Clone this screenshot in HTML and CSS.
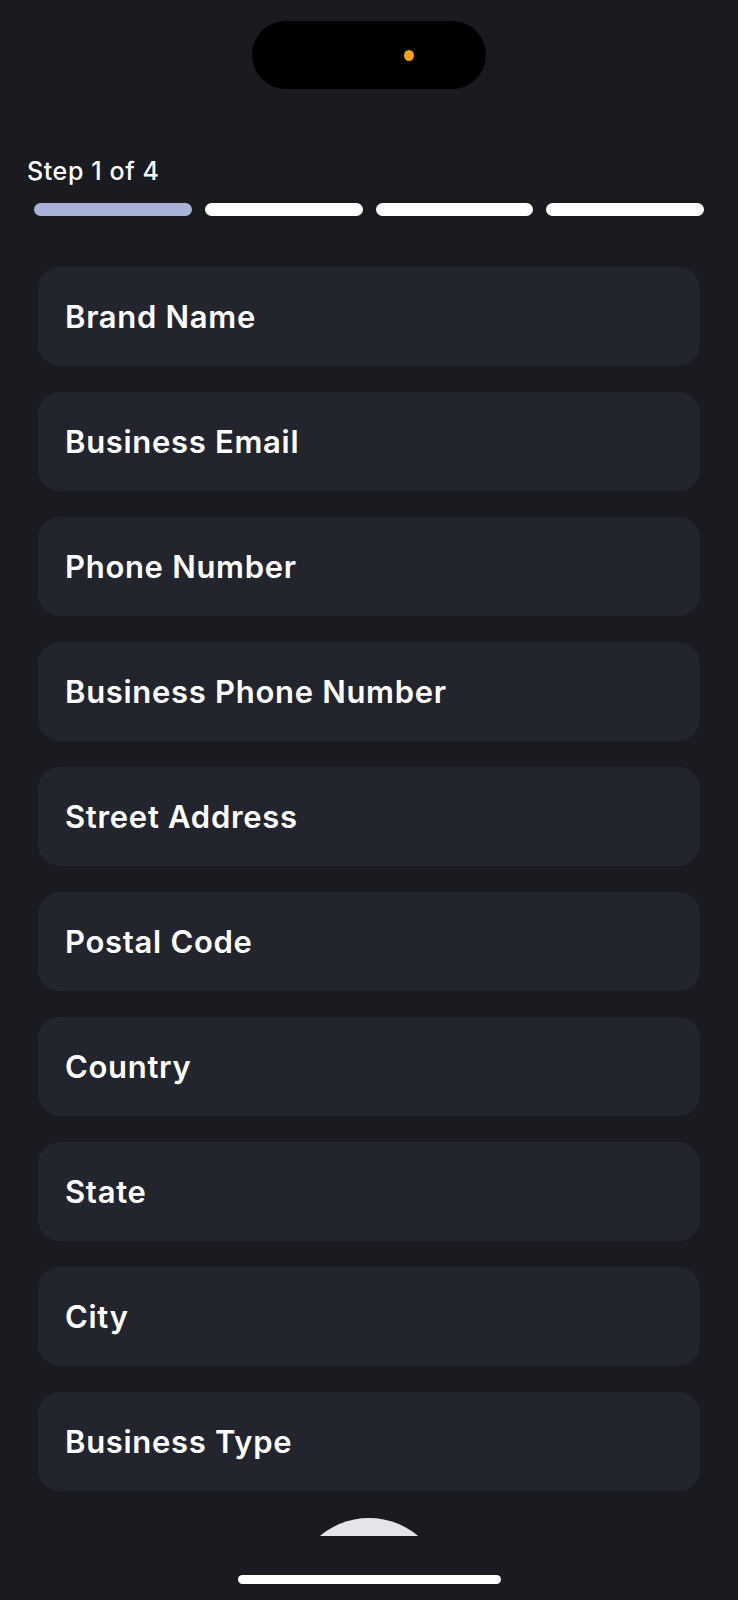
FILE: index.html
```html
<!DOCTYPE html>
<html lang="en">
<head>
<meta charset="utf-8">
<title>Step 1 of 4</title>
<link rel="stylesheet" href="styles.css">
</head>
<body>
<div class="screen">
  <div class="status">
    <div class="island"><span class="cam-dot"></span></div>
  </div>
  <div class="step-label">Step 1 of 4</div>
  <div class="progress">
    <span class="seg active"></span>
    <span class="seg"></span>
    <span class="seg"></span>
    <span class="seg"></span>
  </div>
  <div class="fields">
    <div class="field">Brand Name</div>
    <div class="field">Business Email</div>
    <div class="field">Phone Number</div>
    <div class="field">Business Phone Number</div>
    <div class="field">Street Address</div>
    <div class="field">Postal Code</div>
    <div class="field">Country</div>
    <div class="field">State</div>
    <div class="field">City</div>
    <div class="field">Business Type</div>
  </div>
  <div class="fab-wrap"><div class="fab"></div></div>
  <div class="home-bar"><span class="home-indicator"></span></div>
</div>
</body>
</html>
```
FILE: styles.css
```css
html, body {
  margin: 0;
  padding: 0;
  background: #1a1b20;
}
.screen {
  width: 738px;
  height: 1600px;
  background: #1a1b20;
  font-family: Inter, "Noto Sans", "Liberation Sans", sans-serif;
  color: #ffffff;
  display: flex;
  flex-direction: column;
  overflow: hidden;
}
.status {
  display: flex;
  justify-content: center;
  padding-top: 21px;
}
.island {
  width: 234px;
  height: 68px;
  background: #000;
  border-radius: 34px;
  display: flex;
  align-items: center;
  justify-content: flex-start;
}
.cam-dot {
  width: 10px;
  height: 11px;
  border-radius: 50%;
  background: #f7a11a;
  margin-left: 152px;
}
.step-label {
  margin-top: 67px;
  padding-left: 27px;
  font-size: 25px;
  font-weight: 500;
  line-height: 30px;
  letter-spacing: 0.6px;
}
.progress {
  display: flex;
  gap: 13px;
  padding: 0 34px;
  margin-top: 17px;
}
.seg {
  flex: 1;
  height: 13px;
  border-radius: 7px;
  background: #ffffff;
}
.seg.active {
  background: #a9b3d9;
}
.fields {
  display: flex;
  flex-direction: column;
  gap: 26px;
  padding: 0 38px;
  margin-top: 51px;
}
.field {
  height: 99px;
  box-sizing: border-box;
  background: #23252e;
  border-radius: 22px;
  display: flex;
  align-items: center;
  padding-left: 27px;
  font-size: 31px;
  font-weight: 600;
  letter-spacing: 0.7px;
}
.fab-wrap {
  height: 45px;
  overflow: hidden;
  display: flex;
  justify-content: center;
}
.fab {
  width: 152px;
  height: 152px;
  border-radius: 50%;
  background: #e4e5e9;
  margin-top: 27px;
  flex: none;
}
.home-bar {
  display: flex;
  justify-content: center;
  padding-top: 39px;
}
.home-indicator {
  width: 263px;
  height: 9px;
  border-radius: 5px;
  background: #ffffff;
}
```
